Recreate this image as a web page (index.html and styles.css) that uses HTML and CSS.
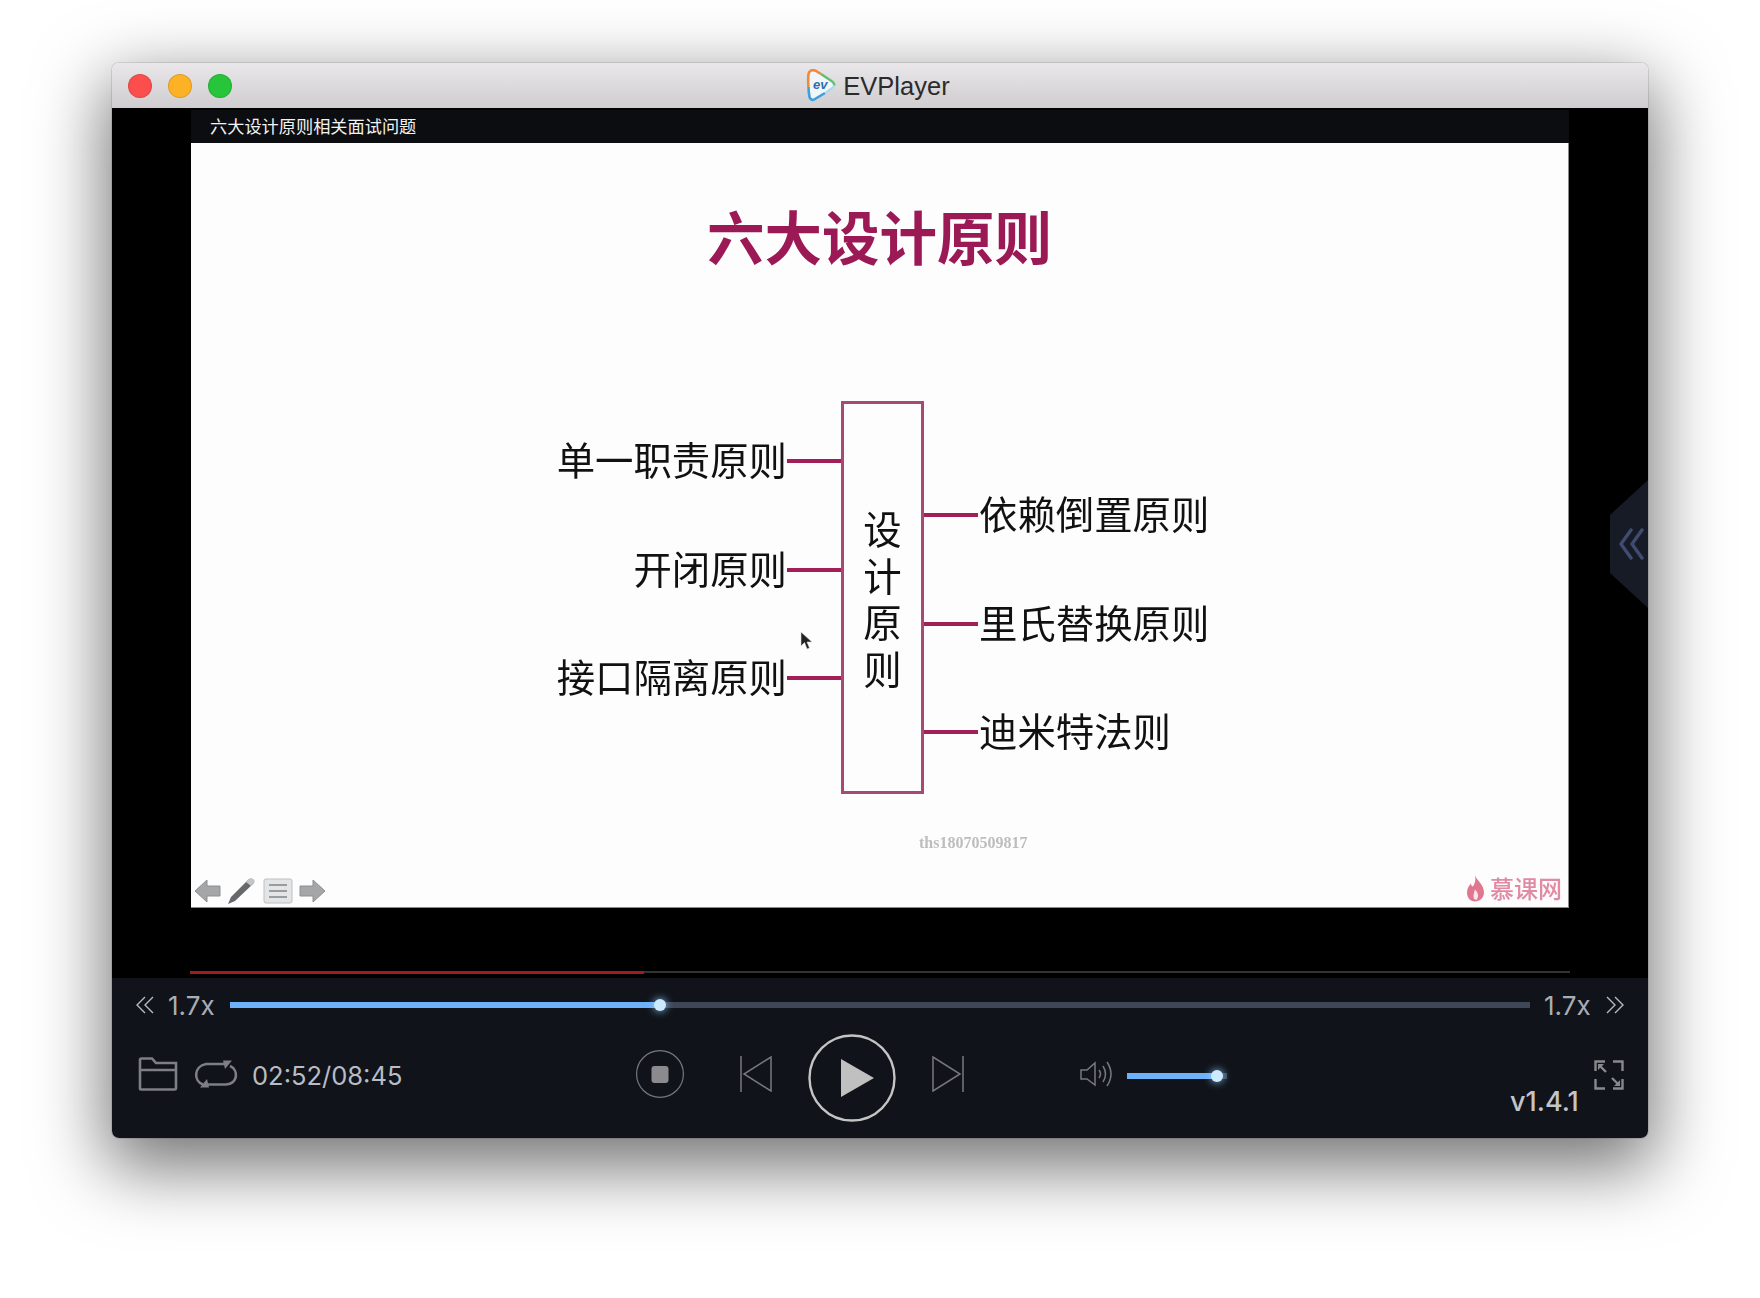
FILE: index.html
```html
<!DOCTYPE html>
<html lang="zh-CN">
<head>
    <title>EVPlayer</title>
    <link rel="stylesheet" href="styles.css">
</head>
<body>
<div class="window">
    <div class="titlebar">
        <div class="lights">
            <span class="light red"></span>
            <span class="light yellow"></span>
            <span class="light green"></span>
        </div>
        <div class="app-title">
            <svg class="app-logo" width="32" height="33" viewBox="0 0 32 33">
                <path d="M4 5 C4 1 7 0 10 1 L28 12 C31 14 31 17 28 19 L11 31 C8 33 5 31 5 28 C3 20 3 12 4 5Z" fill="#f3f6f9"/>
                <path d="M4.500 18 C4 13 4 9 4.500 5 C5 1.500 8 0.500 11 1.500 L17 5" fill="none" stroke="#ef8a3a" stroke-width="2.600"/>
                <path d="M17 5 L27.500 12 C30 13.500 30.500 15 30 16.500" fill="none" stroke="#62c070" stroke-width="2.600"/>
                <path d="M4.500 18 C4.500 22 5 25 5.500 28 C6.500 31 9 31.500 11 30 L21 24" fill="none" stroke="#3d9fdc" stroke-width="2.600"/>
                <path d="M21 24 L28 19 C29 18 30 17.500 30 16.500" fill="none" stroke="#a8d8e8" stroke-width="2"/>
                <text x="9" y="20" class="app-logo-text">ev</text>
            </svg>
            <span class="app-name">EVPlayer</span>
        </div>
    </div>

    <div class="video">
        <div class="video-inner">
            <div class="caption">六大设计原则相关面试问题</div>
            <div class="slide">
                <h1 class="slide-title">六大设计原则</h1>
                <div class="diagram">
                    <div class="branches left">
                        <div class="branch"><span>单一职责原则</span><i></i></div>
                        <div class="branch"><span>开闭原则</span><i></i></div>
                        <div class="branch"><span>接口隔离原则</span><i></i></div>
                    </div>
                    <div class="center-box">
                        <span>设</span><span>计</span><span>原</span><span>则</span>
                    </div>
                    <div class="branches right">
                        <div class="branch"><i></i><span>依赖倒置原则</span></div>
                        <div class="branch"><i></i><span>里氏替换原则</span></div>
                        <div class="branch"><i></i><span>迪米特法则</span></div>
                    </div>
                </div>
                <div class="watermark">ths18070509817</div>
                <div class="slide-foot">
                    <div class="slide-tools">
                        <svg width="27" height="26" viewBox="0 0 27 26"><path d="M1 13 L13 2 V8 H26 V18 H13 V24Z" fill="#a4a6a8" stroke="#8d8f91"/></svg>
                        <svg width="30" height="28" viewBox="0 0 30 28"><path d="M22 2 L27 6 L8 24 L1 27 L4 20Z" fill="#66686b"/><path d="M22 2 C24 -1 30 4 27 6 L24 9 L19 5Z" fill="#c2c4c6"/></svg>
                        <svg width="30" height="26" viewBox="0 0 30 26"><rect x="1" y="1" width="28" height="24" rx="2" fill="#e4e5e6" stroke="#bdbfc1"/><path d="M6 7 H24 M6 13 H24 M6 19 H24" stroke="#9a9c9e" stroke-width="2"/></svg>
                        <svg width="27" height="26" viewBox="0 0 27 26"><path d="M26 13 L14 2 V8 H1 V18 H14 V24Z" fill="#a4a6a8" stroke="#8d8f91"/></svg>
                    </div>
                    <div class="slide-brand">
                        <svg width="19" height="27" viewBox="0 0 19 26"><path d="M9 0 C11 5 18 9 18 17 C18 22 14 26 9 26 C4 26 1 22 1 17 C1 13 3 10 5 8 C5 10 6 11 7 11 C9 8 10 4 9 0Z" fill="#e0768f"/><path d="M9 14 C12 17 13 20 11 24 C8 25 6 22 9 14Z" fill="#fbe3e9"/></svg>
                        <span>慕课网</span>
                    </div>
                </div>
                <svg class="mouse" width="13" height="19" viewBox="0 0 13 19"><path d="M1 1 V15 L4.500 11.500 L7 18 L9.500 17 L7 11 H12Z" fill="#222" stroke="#ddd" stroke-width=".6"/></svg>
            </div>
        </div>
        <div class="video-progress"><div class="video-progress-fill"></div></div>
        <div class="side-tab">
            <svg width="26" height="32" viewBox="0 0 26 32"><path d="M13 2 L3 16 L13 30 M24 2 L14 16 L24 30" fill="none" stroke="#3f4c70" stroke-width="3.400" stroke-linecap="round" stroke-linejoin="round"/></svg>
        </div>
    </div>

    <div class="controls">
        <div class="speed-row">
            <svg class="chev" width="18" height="18" viewBox="0 0 18 18"><path d="M9 1 L1 9 L9 17 M17 1 L9 9 L17 17" fill="none" stroke="#b6b9be" stroke-width="1.400"/></svg>
            <span class="speed">1.7x</span>
            <div class="track seek">
                <div class="track-fill" style="width: 33.1%"></div>
                <span class="knob"></span>
            </div>
            <span class="speed">1.7x</span>
            <svg class="chev" width="18" height="18" viewBox="0 0 18 18"><path d="M1 1 L9 9 L1 17 M9 1 L17 9 L9 17" fill="none" stroke="#b6b9be" stroke-width="1.400"/></svg>
        </div>
        <div class="button-row">
            <svg class="folder" width="40" height="34" viewBox="0 0 40 34"><path d="M2 32 V3 Q2 1.500 3.500 1.500 H14 L18 6 H38 V31 Q38 32.500 36.500 32.500 H3Q2 32.500 2 32Z M2 13 H38" fill="none" stroke="#7d7f83" stroke-width="2.600"/></svg>
            <svg class="loop" width="44" height="28" viewBox="0 0 44 28">
                <path d="M9 24.500 C-1 21 0 6 12 4 H31 M36 6 C45 10 44 24 32 24.500 H13" fill="none" stroke="#7d7f83" stroke-width="2.600"/>
                <path d="M29 0.500 L38 0.500 L31 9Z M15 27.500 L6 27.500 L13 19Z" fill="#7d7f83"/>
            </svg>
            <span class="time">02:52/08:45</span>
            <svg class="stop" width="48" height="48" viewBox="0 0 48 48"><circle cx="24" cy="24" r="23.400" fill="none" stroke="#77797d" stroke-width="1.200"/><rect x="15.500" y="16" width="17" height="17" rx="3" fill="#8b8b8d"/></svg>
            <svg class="prev" width="32" height="36" viewBox="0 0 32 36"><path d="M1 0 V36 M31 1 V35 L4 18Z" fill="none" stroke="#77797d" stroke-width="1.500"/></svg>
            <svg class="play" width="88" height="88" viewBox="0 0 88 88"><circle cx="44" cy="44" r="42.500" fill="none" stroke="#c4c4c4" stroke-width="2.400"/><path d="M33 25 L66 44 L33 63Z" fill="#c0c0c0"/></svg>
            <svg class="next" width="32" height="36" viewBox="0 0 32 36"><path d="M31 0 V36 M1 1 V35 L28 18Z" fill="none" stroke="#77797d" stroke-width="1.500"/></svg>
            <svg class="speaker" width="33" height="26" viewBox="0 0 33 26"><path d="M1 9 H7 L15 2 V24 L7 18 H1Z" fill="none" stroke="#77797d" stroke-width="1.500"/><path d="M19 9 Q22 13 19 17 M23 5 Q28 13 23 21 M27 1 Q35 13 27 25" fill="none" stroke="#77797d" stroke-width="1.500"/></svg>
            <div class="track volume">
                <div class="track-fill" style="width: 90%"></div>
                <span class="knob"></span>
            </div>
            <span class="version">v1.4.1</span>
            <svg class="fullscreen" width="30" height="30" viewBox="0 0 30 30">
                <path d="M1.500 11 V1.500 H11 M19 1.500 H28.500 V11 M28.500 19 V28.500 H19 M11 28.500 H1.500 V19 M5 5 L12 12 M25 25 L18 18" fill="none" stroke="#88898c" stroke-width="2.400"/>
                <path d="M4 4 H10 L4 10Z M26 26 H20 L26 20Z" fill="#88898c"/>
            </svg>
        </div>
    </div>
</div>
</body>
</html>
```

FILE: styles.css
```css
body {
    margin: 0;
    padding: 63px 112px 0;
    height: 1298px;
    box-sizing: border-box;
    overflow: hidden;
    background-color: #ffffff;
    font-family: "Liberation Sans", "Noto Sans CJK SC", sans-serif;
}

.window {
    width: 1536px;
    height: 1075px;
    border-radius: 7px;
    overflow: hidden;
    box-shadow: 0 24px 70px 6px rgba(0, 0, 0, 0.55), 0 0 0 1px rgba(0, 0, 0, 0.1);
    display: flex;
    flex-direction: column;
}

/* title bar */
.titlebar {
    height: 45px;
    flex: none;
    position: relative;
    display: flex;
    align-items: center;
    justify-content: center;
    background: linear-gradient(#e9e7e9, #cfcdcf);
}

.lights {
    position: absolute;
    left: 16px;
    top: 11px;
    display: flex;
    gap: 16px;
}

.light {
    width: 24px;
    height: 24px;
    border-radius: 50%;
    box-sizing: border-box;
    border: 1px solid rgba(0, 0, 0, 0.12);
}

.red { background-color: #fc4f4d; }
.yellow { background-color: #fdb125; }
.green { background-color: #27c53a; }

.app-title {
    display: flex;
    align-items: center;
    gap: 7px;
    font-size: 25.5px;
    color: #2b2b2b;
    margin-left: -6px;
}

.app-name {
    margin-top: 2px;
}

.app-logo-text {
    font-family: "Liberation Sans", sans-serif;
    font-size: 13px;
    font-style: italic;
    font-weight: bold;
    fill: #2f6fb0;
}

/* video */
.video {
    height: 870px;
    flex: none;
    position: relative;
    background-color: #000000;
    padding: 2px 0 0 79px;
    box-sizing: border-box;
}

.video-inner {
    width: 1378px;
}

.caption {
    height: 33px;
    line-height: 31px;
    padding-left: 19px;
    background-color: #0c0d10;
    color: #f2f2f2;
    font-size: 17.2px;
    font-family: "Noto Sans CJK SC", sans-serif;
}

.slide {
    height: 765px;
    box-sizing: border-box;
    position: relative;
    display: flex;
    flex-direction: column;
    background-color: #fdfdfd;
    border-right: 1px solid #8a8a8a;
    border-bottom: 1px solid #8a8a8a;
    font-family: "Noto Sans CJK SC", sans-serif;
    filter: blur(0.5px);
}

.slide-title {
    margin: 52px 0 126px;
    height: 80px;
    line-height: 80px;
    font-size: 57.5px;
    font-weight: 700;
    text-align: center;
    color: #9b1a55;
}

.diagram {
    display: flex;
    margin-left: 366px;
    height: 393px;
}

.branches {
    display: flex;
    flex-direction: column;
    width: 284px;
    padding-top: 6px;
    box-sizing: border-box;
    white-space: nowrap;
}

.branches.right {
    padding-top: 60px;
}

.branch {
    height: 108.5px;
    display: flex;
    align-items: center;
    font-size: 38.4px;
    line-height: 1.3;
    color: #111111;
}

.branch span {
    margin-top: -4px;
}

.branches.left .branch {
    justify-content: flex-end;
}

.branch i {
    width: 54px;
    height: 4px;
    flex: none;
    background-color: #a31f58;
}

.branches.right .branch i {
    margin-right: 1px;
}

.center-box {
    width: 83px;
    height: 393px;
    flex: none;
    box-sizing: border-box;
    border: 3px solid #a64a75;
    padding-bottom: 1px;
    display: flex;
    flex-direction: column;
    align-items: center;
    justify-content: center;
    font-size: 38.4px;
    line-height: 46.5px;
    color: #111111;
}

.watermark {
    margin: 39px 0 0 728px;
    line-height: 20px;
    font-size: 16px;
    font-family: "Liberation Serif", serif;
    font-weight: bold;
    color: #bdbdbd;
}

.slide-foot {
    margin-top: auto;
    padding: 0 6px 2px 3px;
    display: flex;
    justify-content: space-between;
    align-items: flex-end;
}

.slide-tools {
    display: flex;
    align-items: center;
    gap: 6px;
}

.slide-brand {
    display: flex;
    align-items: center;
    gap: 5px;
    margin-bottom: 2px;
    font-size: 24px;
    font-weight: 500;
    line-height: 30px;
    color: #e28aa3;
}

.mouse {
    position: absolute;
    left: 609px;
    top: 488px;
}

.video-progress {
    position: absolute;
    left: 78px;
    bottom: 5px;
    width: 1380px;
    height: 2px;
    background-color: #333333;
}

.video-progress-fill {
    width: 454px;
    height: 3px;
    background-color: #a01c20;
}

.side-tab {
    position: absolute;
    right: 0;
    top: 372px;
    width: 38px;
    height: 128px;
    padding-left: 4px;
    box-sizing: border-box;
    display: flex;
    align-items: center;
    justify-content: center;
    background-color: #171b26;
    clip-path: polygon(0 35px, 38px 0, 38px 128px, 0 93px);
}

/* controls */
.controls {
    flex: 1;
    background-color: #10131a;
    color: #a9adb5;
    font-family: Inter, "Liberation Sans", sans-serif;
}

.speed-row {
    height: 54px;
    padding: 0 24px;
    display: flex;
    align-items: center;
}

.speed {
    font-size: 26px;
    width: 47px;
    white-space: nowrap;
}

.speed-row .speed:nth-child(2),
.speed-row .speed:nth-child(4) {
    margin: 0 15px 0 14px;
}

.track {
    position: relative;
    height: 6px;
    background-color: #3e4657;
}

.seek {
    width: 1300px;
}

.volume {
    width: 100px;
    margin: 4px 0 0 14px;
}

.track-fill {
    height: 6px;
    background-color: #6db1fb;
}

.knob {
    position: absolute;
    top: -3px;
    width: 12px;
    height: 12px;
    border-radius: 50%;
    background-color: #cdeafd;
    box-shadow: 0 0 8px #8fcbfa;
}

.seek .knob {
    left: calc(33.1% - 6px);
}

.volume .knob {
    left: calc(90% - 6px);
}

.button-row {
    height: 88px;
    margin-top: -2px;
    padding: 0 24px 0 26px;
    display: flex;
    align-items: center;
}

.loop {
    margin-left: 16px;
}

.time {
    margin: 3px 0 0 14px;
    width: 151px;
    font-size: 25.5px;
    color: #b9bcc2;
    white-space: nowrap;
}

.stop {
    margin-left: 233px;
}

.prev {
    margin-left: 56px;
}

.play {
    margin: 8px 0 0 36px;
}

.next {
    margin-left: 36px;
}

.speaker {
    margin-left: 116px;
}

.version {
    margin: 55px 0 0 auto;
    width: 68px;
    font-size: 27px;
    font-weight: 500;
    color: #c3c5c9;
    white-space: nowrap;
}

.fullscreen {
    margin: 2px 0 0 16px;
}
```
